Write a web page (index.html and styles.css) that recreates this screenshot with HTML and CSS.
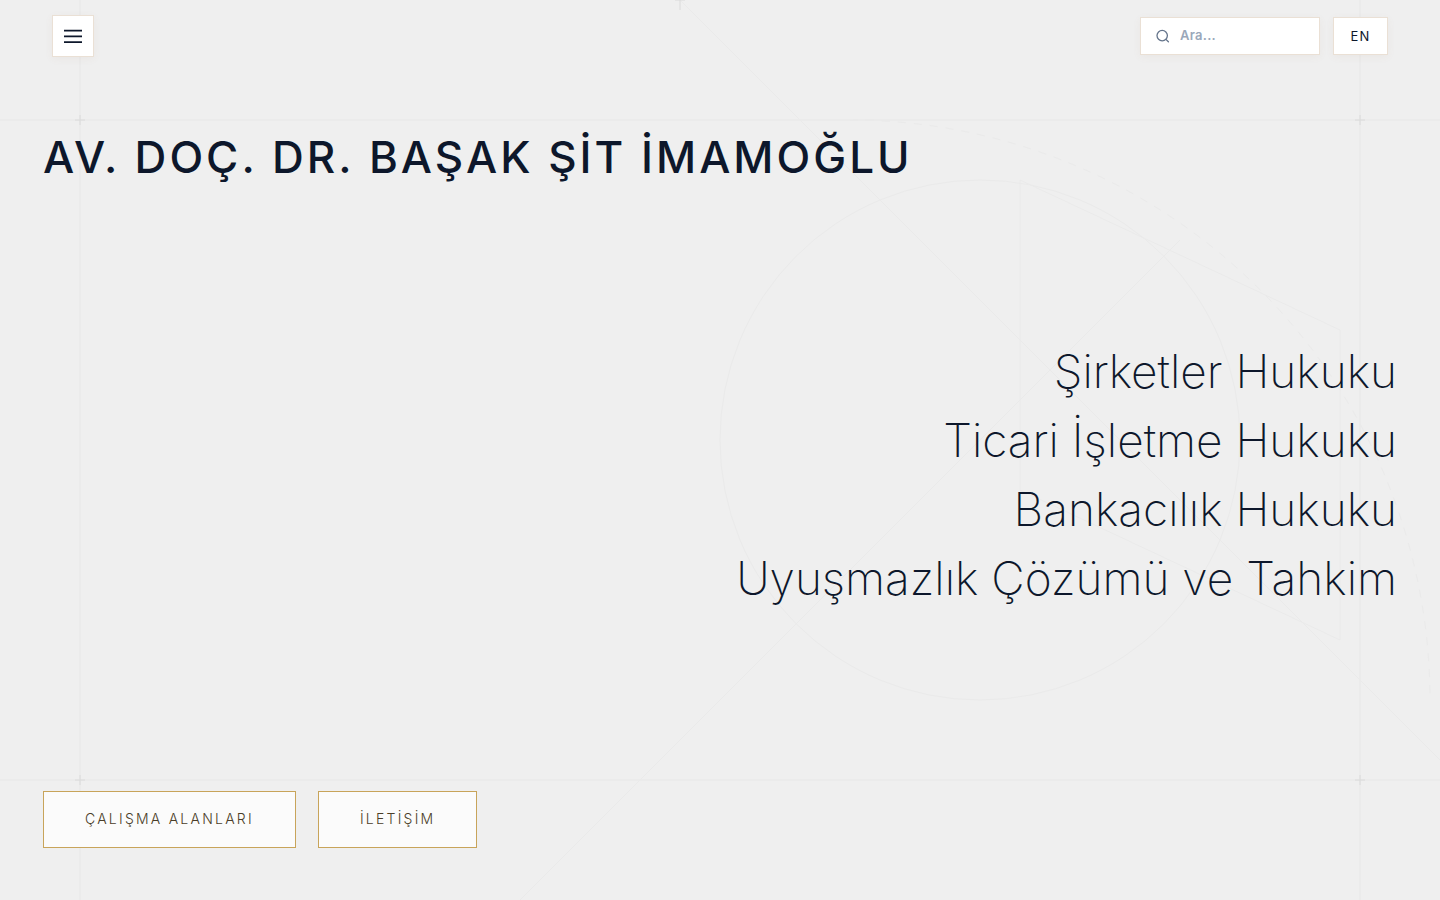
FILE: index.html
```
<!DOCTYPE html>
<html lang="tr">
<head>
  <meta charset="UTF-8">
  <meta name="viewport" content="width=device-width, initial-scale=1">
  <title>Av. Doç. Dr. Başak Şit İmamoğlu</title>
  <link rel="stylesheet" href="styles.css">
</head>
<body>

  <svg class="backdrop" viewBox="0 0 1440 900" preserveAspectRatio="xMidYMid slice" aria-hidden="true">
    <g class="grid-lines">
      <path d="M80 0V900M1360 0V900M0 120H1440M0 780H1440"/>
    </g>
    <g class="shapes">
      <path d="M680 0L1440 760M520 900L1180 240"/>
      <circle cx="980" cy="440" r="260"/>
      <path d="M1020 180L1340 330V640L1020 490Z"/>
      <path class="dashed" d="M850 120A580 580 0 0 1 1430 700"/>
    </g>
    <path class="marks" d="M75 120H85M80 115V125M1355 120H1365M1360 115V125M75 780H85M80 775V785M1355 780H1365M1360 775V785M675 0H685M680 0V10"/>
  </svg>

  <div class="page">
    <header class="topbar">
      <button class="menu-btn" type="button" aria-label="Menü">
        <svg width="18" height="14" viewBox="0 0 18 14" aria-hidden="true">
          <path d="M0 1.6H18M0 7.4H18M0 13.1H18" stroke="currentColor" stroke-width="1.8"/>
        </svg>
      </button>
      <div class="tools">
        <label class="search">
          <svg width="14" height="14" viewBox="0 0 14 14" fill="none" stroke="currentColor" stroke-width="1.3" stroke-linecap="round" aria-hidden="true">
            <circle cx="6.2" cy="6.6" r="5.2"/>
            <path d="M10.2 10.6L12.4 12.8"/>
          </svg>
          <input type="search" placeholder="Ara..." aria-label="Ara">
        </label>
        <button class="lang-btn" type="button">EN</button>
      </div>
    </header>

    <main class="hero">
      <h1>AV. DOÇ. DR. BAŞAK ŞİT İMAMOĞLU</h1>
      <ul class="areas">
        <li>Şirketler Hukuku</li>
        <li>Ticari İşletme Hukuku</li>
        <li>Bankacılık Hukuku</li>
        <li>Uyuşmazlık Çözümü ve Tahkim</li>
      </ul>
      <nav class="actions">
        <a href="#calisma-alanlari">ÇALIŞMA ALANLARI</a>
        <a href="#iletisim">İLETİŞİM</a>
      </nav>
    </main>
  </div>

</body>
</html>
```
FILE: styles.css
```
* {
  box-sizing: border-box;
}
body {
  margin: 0;
  background: #efefef;
  color: #0d172b;
  font-family: Inter, "Open Sans", sans-serif;
}

/* background drawing */
.backdrop {
  position: absolute;
  top: 0;
  left: 0;
  width: 100%;
  height: 100%;
  z-index: -1;
  fill: none;
}
.grid-lines {
  stroke: #ebebeb;
  stroke-width: 2;
}
.shapes {
  stroke: #eaeaea;
}
.dashed {
  stroke-dasharray: 8 8;
}
.marks {
  stroke: #dadada;
}

.page {
  display: flex;
  flex-direction: column;
  min-height: 100vh;
}

/* header */
.topbar {
  display: flex;
  justify-content: space-between;
  align-items: center;
  height: 72px;
  padding: 0 52px;
}
.menu-btn, .search, .lang-btn {
  display: flex;
  align-items: center;
  border: 1px solid #eae0d5;
  background: #fff;
  box-shadow: 0 2px 8px rgba(150, 110, 60, 0.06);
}
.menu-btn {
  justify-content: center;
  width: 42px;
  height: 42px;
  padding: 0;
  color: #0d172b;
}
.tools {
  display: flex;
  gap: 13px;
}
.search {
  gap: 10px;
  width: 180px;
  height: 38px;
  padding: 0 15px;
  color: #64748b;
}
.search svg {
  flex: none;
}
.search input {
  width: 100%;
  padding: 0 0 2px;
  border: 0;
  outline: 0;
  background: none;
  font: 600 13px/18px Inter, sans-serif;
  letter-spacing: 0.02em;
}
.search input::placeholder {
  color: #9aa8ba;
}
.lang-btn {
  justify-content: center;
  width: 55px;
  height: 38px;
  padding: 0;
  color: #0d172b;
  font: 400 13px/18px Inter, sans-serif;
  letter-spacing: 0.1em;
}

/* hero */
.hero {
  flex: 1;
  display: flex;
  flex-direction: column;
  padding: 57px 43px 52px;
}
h1 {
  margin: 0;
  font-size: 44px;
  font-weight: 500;
  line-height: 56px;
  letter-spacing: 3px;
}
.areas {
  margin: auto 0;
  padding: 0 0 27px;
  list-style: none;
  text-align: right;
  font-size: 46px;
  font-weight: 200;
  line-height: 69px;
}
.actions {
  display: flex;
  flex-wrap: wrap;
  gap: 22px;
}
.actions a {
  padding: 0 41px 2px;
  border: 1px solid #c8a45a;
  background: #fbfbfb;
  color: #4a3d28;
  font-size: 14px;
  font-weight: 300;
  line-height: 53px;
  letter-spacing: 0.16em;
  text-decoration: none;
}
```
